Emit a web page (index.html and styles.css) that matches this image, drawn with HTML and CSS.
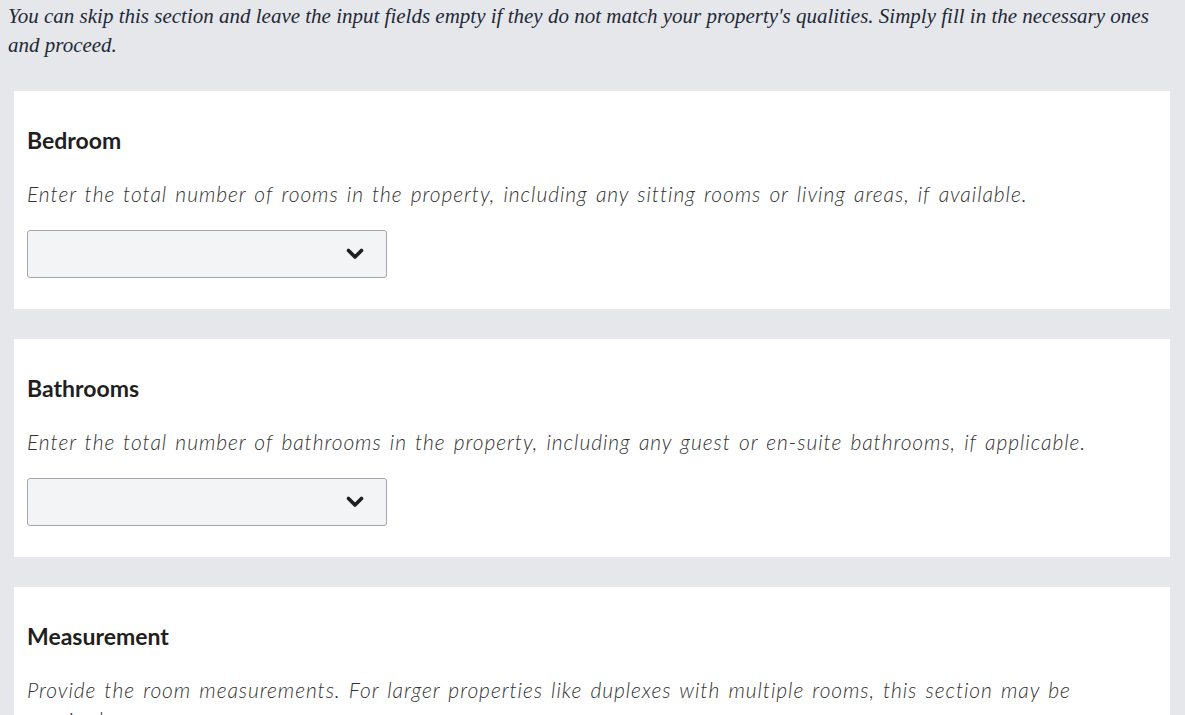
FILE: index.html
```html
<!DOCTYPE html>
<html>
<head>
<meta charset="utf-8">
<link rel="stylesheet" href="styles.css">
</head>
<body>
<div class="page">
  <p class="intro">You can skip this section and leave the input fields empty if they do not match your property's qualities. Simply fill in the necessary ones and proceed.</p>
  <div class="cards">
    <section class="card">
      <h2 class="card-title">Bedroom</h2>
      <p class="card-desc">Enter the total number of rooms in the property, including any sitting rooms or living areas, if available.</p>
      <div class="select">
        <svg class="chev" width="18" height="12" viewBox="0 0 18 12"><polyline points="2.5,2.5 9,9 15.5,2.5" fill="none" stroke="#1f1f1f" stroke-width="3.6" stroke-linecap="round" stroke-linejoin="round"/></svg>
      </div>
    </section>
    <section class="card">
      <h2 class="card-title">Bathrooms</h2>
      <p class="card-desc">Enter the total number of bathrooms in the property, including any guest or en-suite bathrooms, if applicable.</p>
      <div class="select">
        <svg class="chev" width="18" height="12" viewBox="0 0 18 12"><polyline points="2.5,2.5 9,9 15.5,2.5" fill="none" stroke="#1f1f1f" stroke-width="3.6" stroke-linecap="round" stroke-linejoin="round"/></svg>
      </div>
    </section>
    <section class="card">
      <h2 class="card-title">Measurement</h2>
      <p class="card-desc">Provide the room measurements. For larger properties like duplexes with multiple rooms, this section may be required.</p>
    </section>
  </div>
</div>
</body>
</html>
```
FILE: styles.css
```css
html, body {
  margin: 0;
  padding: 0;
  background: #e5e7eb;
  overflow: hidden;
}
.page {
  padding: 2px 15px 0 8px;
}
.intro {
  margin: 0 0 31px 0;
  font-family: "Liberation Serif", serif;
  font-style: italic;
  font-size: 21px;
  line-height: 29px;
  color: #1f2937;
}
.cards {
  display: flex;
  flex-direction: column;
  gap: 30px;
  margin-left: 6px;
}
.card {
  background: #ffffff;
  padding: 34px 13px 31px 13px;
}
.card-title {
  margin: 0;
  font-family: "Lato", "Open Sans", sans-serif;
  font-weight: 700;
  font-size: 23px;
  line-height: 30px;
  color: #1f1f1f;
}
.card-desc {
  margin: 24px 0 0 0;
  font-family: "Lato", sans-serif;
  font-weight: 300;
  font-style: italic;
  font-size: 21px;
  line-height: 30px;
  letter-spacing: 0.93px;
  word-spacing: 2px;
  color: #333333;
}
.select {
  margin-top: 21px;
  width: 360px;
  height: 48px;
  box-sizing: border-box;
  background: #f3f4f6;
  border: 1px solid #a3a6ad;
  border-radius: 3px;
  display: flex;
  align-items: center;
  justify-content: flex-end;
  padding-right: 22px;
}
.chev {
  display: block;
}
```
